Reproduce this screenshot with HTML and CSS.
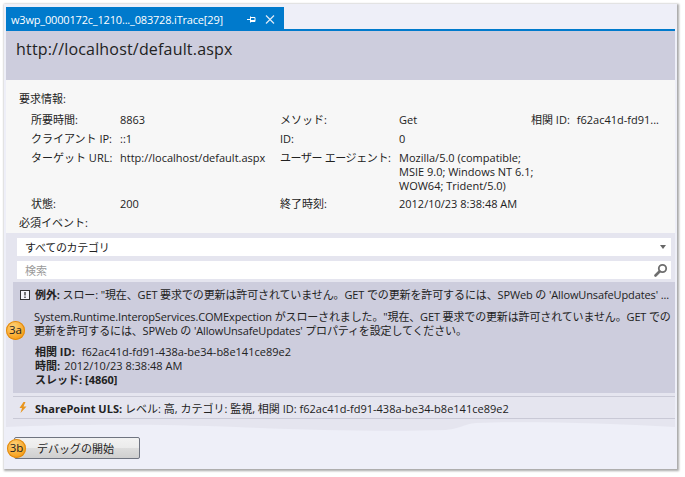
FILE: index.html
```html
<!DOCTYPE html>
<html lang="ja">
<head>
<meta charset="utf-8">
<title>iTrace</title>
<link rel="stylesheet" href="styles.css">
</head>
<body>
<div class="window">
  <div class="tabstrip">
    <div class="tab">
      <span class="tab-title">w3wp_0000172c_1210..._083728.iTrace[29]</span>
      <svg class="tab-pin" width="9" height="9" viewBox="0 0 9 9"><path d="M0 4.500h3M3.500 1.500v6M3.500 2.500h4.500v4h-4.500M3.500 5.500h4.500" fill="none" stroke="#fff"/></svg>
      <svg class="tab-close" width="10" height="9" viewBox="0 0 10 9"><path d="M1 .5l8 8M9 .5l-8 8" fill="none" stroke="#dfeaf6" stroke-width="1.200"/></svg>
    </div>
  </div>
  <div class="header"><h1>http://localhost/default.aspx</h1></div>
  <div class="info">
    <div class="section-title">要求情報:</div>
    <div class="grid">
      <span>所要時間:</span><span>8863</span><span>メソッド:</span><span>Get</span><span class="corr"><span>相関 ID:</span><span>f62ac41d-fd91...</span></span>
      <span>クライアント IP:</span><span>::1</span><span>ID:</span><span>0</span><span></span>
      <span>ターゲット URL:</span><span>http://localhost/default.aspx</span><span class="tight">ユーザー エージェント:</span><span class="agent">Mozilla/5.0 (compatible;<br>MSIE 9.0; Windows NT 6.1;<br>WOW64; Trident/5.0)</span><span></span>
      <span>状態:</span><span>200</span><span>終了時刻:</span><span>2012/10/23 8:38:48 AM</span><span></span>
    </div>
    <div class="section-title events-title">必須イベント:</div>
  </div>
  <div class="events">
    <div class="combo"><span>すべてのカテゴリ</span><span class="arrow"></span></div>
    <div class="search"><span>検索</span>
      <svg width="14" height="14" viewBox="0 0 14 14"><circle cx="8.500" cy="5.500" r="3.700" fill="#fff" stroke="#6e6e6e" stroke-width="1.800"/><path d="M5.500 8.500L1.500 12.500" stroke="#6e6e6e" stroke-width="2.600" stroke-linecap="round"/></svg>
    </div>
    <div class="exception">
      <div class="ex-head">
        <svg class="ex-icon" width="10" height="10" viewBox="0 0 10 10"><rect x=".5" y=".5" width="9" height="9" fill="#f4f4f8" stroke="#333"/><path d="M5 2v3.500M5 6.500v1.500" stroke="#222" stroke-width="1.200"/></svg>
        <p class="ex-line"><b>例外:</b> スロー: "現在、GET 要求での更新は許可されていません。GET での更新を許可するには、SPWeb の 'AllowUnsafeUpdates' ...</p>
      </div>
      <p class="ex-body">System.Runtime.InteropServices.COMExpection がスローされました。"現在、GET 要求での更新は許可されていません。GET での<br>更新を許可するには、SPWeb の 'AllowUnsafeUpdates' プロパティを設定してください。</p>
      <p class="ex-meta"><b>相関 ID:</b><span class="val-wide">f62ac41d-fd91-438a-be34-b8e141ce89e2</span><br><b>時間:</b><span class="val">2012/10/23 8:38:48 AM</span><br><b>スレッド: [4860]</b></p>
      <span class="callout callout-a">3a</span>
    </div>
    <div class="uls">
      <svg width="10" height="11" viewBox="0 0 10 11"><path d="M5.500 0L1.500 6h2.500L2.500 11 8.500 4.500H5.500L7.500 0z" fill="#e8951f"/></svg>
      <p><b>SharePoint ULS:</b> レベル: 高, カテゴリ: 監視, 相関 ID: f62ac41d-fd91-438a-be34-b8e141ce89e2</p>
    </div>
    <svg class="tear" width="669" height="13" viewBox="0 0 669 13" preserveAspectRatio="none"><path d="M0 0H669V8C600 4 520 2 470 4C458 5 456 9 440 11C380 13 300 11 230 8C160 5 60 5 0 8Z" fill="#e5e5ef"/></svg>
  </div>
  <div class="footer">
    <button class="debug" type="button">デバッグの開始</button>
    <span class="callout callout-b">3b</span>
  </div>
</div>
</body>
</html>
```
FILE: styles.css
```css
* { box-sizing: border-box; }
html, body { margin: 0; padding: 0; background: #fff; }
body {
  width: 685px;
  height: 477px;
  overflow: hidden;
  padding: 4px 0 0 4px;
  font-family: "Open Sans", "Noto Sans CJK JP", sans-serif;
  font-size: 11px;
  color: #222;
}
.window {
  position: relative;
  width: 673px;
  height: 465px;
  background: #eeeff8;
  padding: 3px 2px 0 2px;
  box-shadow: 1px 1px 2px 1px #a9a9a9;
}
.tabstrip { height: 24px; border-bottom: 2px solid #007acc; }
.tab {
  width: 278px;
  height: 24px;
  background: #007acc;
  color: #fff;
  display: flex;
  align-items: center;
  padding: 0 9px 0 5px;
}
.tab-title { flex: 1; font-size: 11px; letter-spacing: -.18px; white-space: nowrap; }
.tab-pin { margin-right: 9px; }
.header { height: 49px; background: #cdcddd; padding: 7px 10px 0; }
.header h1 { margin: 0; font-size: 16px; font-weight: 500; letter-spacing: .18px; line-height: 22px; color: #222; }
.info { height: 153px; background: #f7f7f7; padding: 11px 0 0 13px; }
.section-title { line-height: 16px; height: 16px; }
.grid {
  display: grid;
  grid-template-columns: 89px 160px 119px 132px 1fr;
  grid-auto-rows: min-content;
  row-gap: 5px;
  padding: 6px 0 0 12px;
  line-height: 14px;
}
.grid > span { white-space: nowrap; }
.tight { letter-spacing: -.4px; }
.agent { margin-bottom: -1px; }
.corr { display: flex; gap: 7px; }
.events-title { margin-top: 4px; }
.events { background: #e5e5ef; height: 199px; padding: 5px 0 0 7px; position: relative; }
.combo, .search {
  height: 18px;
  background: #fff;
  margin: 0 4px 5px 4px;
  padding: 0 8px 0 8px;
  display: flex;
  align-items: center;
  justify-content: space-between;
}
.combo > span:first-child { letter-spacing: -.3px; }
.search { color: #9a9a9a; margin-bottom: 3px; padding: 0 3px 0 8px; }
.arrow { width: 0; height: 0; border: 3px solid transparent; border-top: 4px solid #666; border-bottom: 0; margin-right: -3px; }
.exception { position: relative; background: #cdcddd; height: 111px; padding: 6px 0 0 7px; }
.ex-head { display: flex; gap: 5px; align-items: center; }
.ex-line { margin: 0; white-space: nowrap; line-height: 14px; letter-spacing: -.12px; }
.ex-body { margin: 8px 0 0 14px; line-height: 14px; letter-spacing: -.14px; white-space: nowrap; }
.ex-meta { margin: 7px 0 0 15px; line-height: 14px; }
.val-wide { margin-left: 7px; }
.val { margin-left: 4px; }
.callout {
  position: absolute;
  width: 19px;
  height: 19px;
  border-radius: 50%;
  background: radial-gradient(circle at 40% 30%, #ffd27a, #f7a11d 70%);
  box-shadow: inset 0 0 0 1px #e08a12;
  color: #222;
  font-size: 11.500px;
  line-height: 18px;
  text-align: center;
}
.callout-a { left: -7px; top: 39px; }
.callout-b { left: 1px; top: 7px; }
.uls {
  margin-top: 3px;
  height: 23px;
  border-top: 1px solid #c9c9d6;
  border-bottom: 1px solid #c9c9d6;
  display: flex;
  align-items: center;
  gap: 7px;
  padding-left: 5px;
}
.uls p { margin: 0; white-space: nowrap; }
.tear { display: block; margin-left: -7px; background: #eeeff8; }
.footer { position: relative; padding: 5px 0 0 8px; }
.debug {
  display: block;
  width: 126px;
  height: 22px;
  padding: 0 0 0 22px;
  text-align: left;
  font: inherit;
  color: #222;
  border: 1px solid #6f7480;
  border-radius: 2px;
  background: linear-gradient(#f2f2f2, #ebebeb 50%, #dddddd 51%, #cfcfcf);
}
```
